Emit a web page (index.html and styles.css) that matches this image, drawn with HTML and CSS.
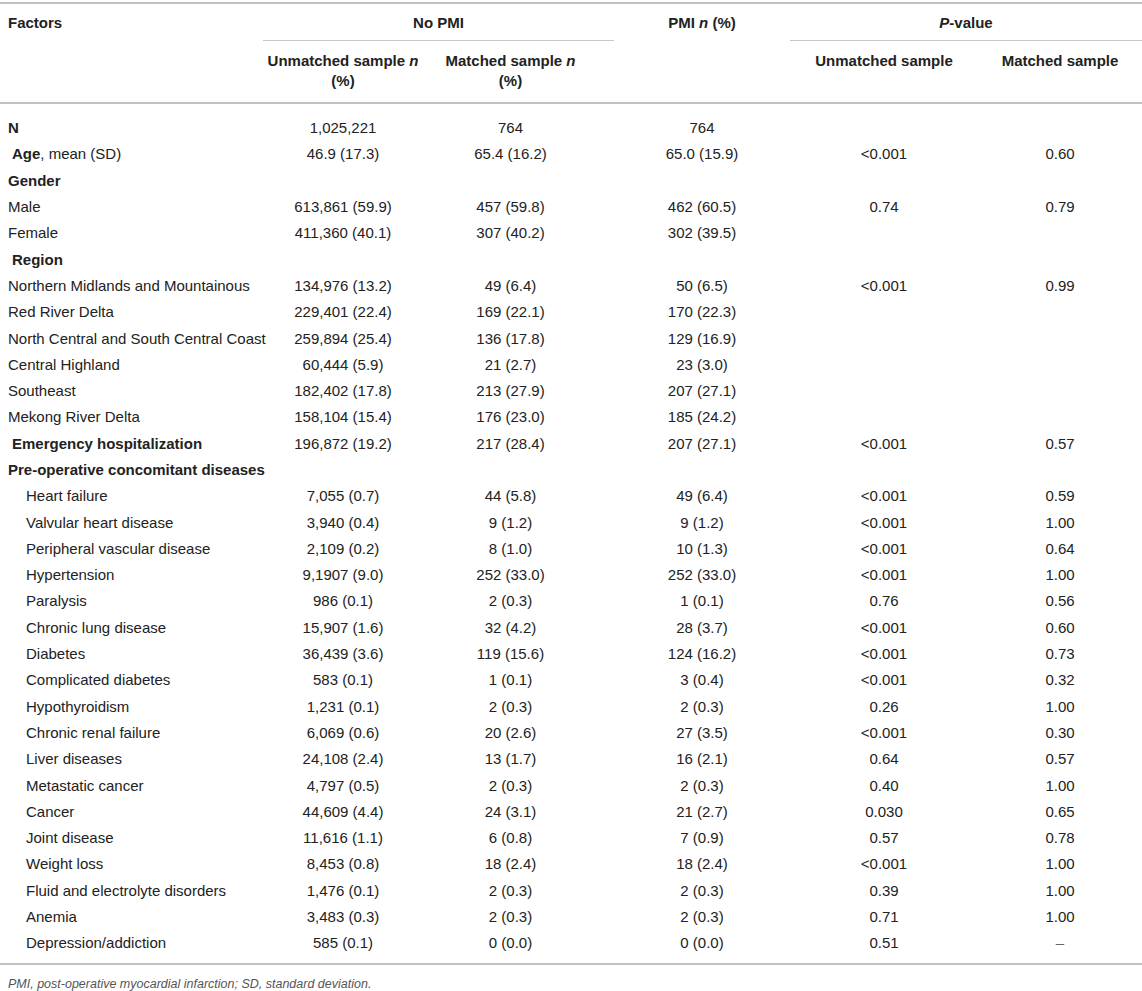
FILE: index.html
```html
<!DOCTYPE html>
<html lang="en">
<head>
<meta charset="utf-8">
<title>Table</title>
<link rel="stylesheet" href="styles.css">
</head>
<body>
<table class="data">
  <colgroup>
    <col class="c1"><col class="c2"><col class="c3"><col class="c4"><col class="c5"><col class="c6">
  </colgroup>
  <thead>
    <tr class="h1">
      <th class="lft" rowspan="2">Factors</th>
      <th colspan="2" class="grp"><div class="rule">No PMI</div></th>
      <th class="pmi" rowspan="2">PMI <i>n</i> (%)</th>
      <th colspan="2" class="grp"><div class="rule"><i>P</i>-value</div></th>
    </tr>
    <tr class="h2">
      <th class="k2">Unmatched sample <i>n</i><br>(%)</th>
      <th class="k3">Matched sample <i>n</i><br>(%)</th>
      <th>Unmatched sample</th>
      <th>Matched sample</th>
    </tr>
  </thead>
  <tbody>
    <tr class="first"><td class="lab"><b>N</b></td><td class="k2">1,025,221</td><td class="k3">764</td><td>764</td><td></td><td></td></tr>
    <tr><td class="lab sp"><b>Age</b>, mean (SD)</td><td class="k2">46.9 (17.3)</td><td class="k3">65.4 (16.2)</td><td>65.0 (15.9)</td><td>&lt;0.001</td><td>0.60</td></tr>
    <tr><td class="lab"><b>Gender</b></td><td class="k2"></td><td class="k3"></td><td></td><td></td><td></td></tr>
    <tr><td class="lab">Male</td><td class="k2">613,861 (59.9)</td><td class="k3">457 (59.8)</td><td>462 (60.5)</td><td>0.74</td><td>0.79</td></tr>
    <tr><td class="lab">Female</td><td class="k2">411,360 (40.1)</td><td class="k3">307 (40.2)</td><td>302 (39.5)</td><td></td><td></td></tr>
    <tr><td class="lab sp"><b>Region</b></td><td class="k2"></td><td class="k3"></td><td></td><td></td><td></td></tr>
    <tr><td class="lab">Northern Midlands and Mountainous</td><td class="k2">134,976 (13.2)</td><td class="k3">49 (6.4)</td><td>50 (6.5)</td><td>&lt;0.001</td><td>0.99</td></tr>
    <tr><td class="lab">Red River Delta</td><td class="k2">229,401 (22.4)</td><td class="k3">169 (22.1)</td><td>170 (22.3)</td><td></td><td></td></tr>
    <tr><td class="lab">North Central and South Central Coast</td><td class="k2">259,894 (25.4)</td><td class="k3">136 (17.8)</td><td>129 (16.9)</td><td></td><td></td></tr>
    <tr><td class="lab">Central Highland</td><td class="k2">60,444 (5.9)</td><td class="k3">21 (2.7)</td><td>23 (3.0)</td><td></td><td></td></tr>
    <tr><td class="lab">Southeast</td><td class="k2">182,402 (17.8)</td><td class="k3">213 (27.9)</td><td>207 (27.1)</td><td></td><td></td></tr>
    <tr><td class="lab">Mekong River Delta</td><td class="k2">158,104 (15.4)</td><td class="k3">176 (23.0)</td><td>185 (24.2)</td><td></td><td></td></tr>
    <tr><td class="lab sp"><b>Emergency hospitalization</b></td><td class="k2">196,872 (19.2)</td><td class="k3">217 (28.4)</td><td>207 (27.1)</td><td>&lt;0.001</td><td>0.57</td></tr>
    <tr><td class="lab"><b>Pre-operative concomitant diseases</b></td><td class="k2"></td><td class="k3"></td><td></td><td></td><td></td></tr>
    <tr><td class="lab ind">Heart failure</td><td class="k2">7,055 (0.7)</td><td class="k3">44 (5.8)</td><td>49 (6.4)</td><td>&lt;0.001</td><td>0.59</td></tr>
    <tr><td class="lab ind">Valvular heart disease</td><td class="k2">3,940 (0.4)</td><td class="k3">9 (1.2)</td><td>9 (1.2)</td><td>&lt;0.001</td><td>1.00</td></tr>
    <tr><td class="lab ind">Peripheral vascular disease</td><td class="k2">2,109 (0.2)</td><td class="k3">8 (1.0)</td><td>10 (1.3)</td><td>&lt;0.001</td><td>0.64</td></tr>
    <tr><td class="lab ind">Hypertension</td><td class="k2">9,1907 (9.0)</td><td class="k3">252 (33.0)</td><td>252 (33.0)</td><td>&lt;0.001</td><td>1.00</td></tr>
    <tr><td class="lab ind">Paralysis</td><td class="k2">986 (0.1)</td><td class="k3">2 (0.3)</td><td>1 (0.1)</td><td>0.76</td><td>0.56</td></tr>
    <tr><td class="lab ind">Chronic lung disease</td><td class="k2">15,907 (1.6)</td><td class="k3">32 (4.2)</td><td>28 (3.7)</td><td>&lt;0.001</td><td>0.60</td></tr>
    <tr><td class="lab ind">Diabetes</td><td class="k2">36,439 (3.6)</td><td class="k3">119 (15.6)</td><td>124 (16.2)</td><td>&lt;0.001</td><td>0.73</td></tr>
    <tr><td class="lab ind">Complicated diabetes</td><td class="k2">583 (0.1)</td><td class="k3">1 (0.1)</td><td>3 (0.4)</td><td>&lt;0.001</td><td>0.32</td></tr>
    <tr><td class="lab ind">Hypothyroidism</td><td class="k2">1,231 (0.1)</td><td class="k3">2 (0.3)</td><td>2 (0.3)</td><td>0.26</td><td>1.00</td></tr>
    <tr><td class="lab ind">Chronic renal failure</td><td class="k2">6,069 (0.6)</td><td class="k3">20 (2.6)</td><td>27 (3.5)</td><td>&lt;0.001</td><td>0.30</td></tr>
    <tr><td class="lab ind">Liver diseases</td><td class="k2">24,108 (2.4)</td><td class="k3">13 (1.7)</td><td>16 (2.1)</td><td>0.64</td><td>0.57</td></tr>
    <tr><td class="lab ind">Metastatic cancer</td><td class="k2">4,797 (0.5)</td><td class="k3">2 (0.3)</td><td>2 (0.3)</td><td>0.40</td><td>1.00</td></tr>
    <tr><td class="lab ind">Cancer</td><td class="k2">44,609 (4.4)</td><td class="k3">24 (3.1)</td><td>21 (2.7)</td><td>0.030</td><td>0.65</td></tr>
    <tr><td class="lab ind">Joint disease</td><td class="k2">11,616 (1.1)</td><td class="k3">6 (0.8)</td><td>7 (0.9)</td><td>0.57</td><td>0.78</td></tr>
    <tr><td class="lab ind">Weight loss</td><td class="k2">8,453 (0.8)</td><td class="k3">18 (2.4)</td><td>18 (2.4)</td><td>&lt;0.001</td><td>1.00</td></tr>
    <tr><td class="lab ind">Fluid and electrolyte disorders</td><td class="k2">1,476 (0.1)</td><td class="k3">2 (0.3)</td><td>2 (0.3)</td><td>0.39</td><td>1.00</td></tr>
    <tr><td class="lab ind">Anemia</td><td class="k2">3,483 (0.3)</td><td class="k3">2 (0.3)</td><td>2 (0.3)</td><td>0.71</td><td>1.00</td></tr>
    <tr class="last"><td class="lab ind">Depression/addiction</td><td class="k2">585 (0.1)</td><td class="k3">0 (0.0)</td><td>0 (0.0)</td><td>0.51</td><td class="dash">–</td></tr>
  </tbody>
</table>
<p class="note">PMI, post-operative myocardial infarction; SD, standard deviation.</p>
</body>
</html>
```

FILE: styles.css
```css
html, body {
  margin: 0;
  padding: 0;
  background: #ffffff;
}
body {
  font-family: "Liberation Sans", Arial, Helvetica, sans-serif;
  font-size: 15px;
  color: #222222;
}
.data {
  width: 1142px;
  border-collapse: collapse;
  table-layout: fixed;
  margin-top: 2px;
  border-top: 2px solid #c2c2c2;
  border-bottom: 2px solid #c2c2c2;
}
.c1 { width: 263px; }
.c2 { width: 170px; }
.c3 { width: 181px; }
.c4 { width: 176px; }
.c5 { width: 188px; }
.c6 { width: 164px; }

th {
  font-weight: bold;
  text-align: center;
  vertical-align: top;
  line-height: 20px;
  padding: 0 4px;
  white-space: nowrap;
}
th.lft {
  text-align: left;
  padding: 9px 8px 0 8px;
}
th.pmi {
  padding-top: 9px;
}
.h1 th.grp {
  padding: 0;
}
.rule {
  padding: 9px 0 7px 0;
  border-bottom: 1px solid #c8c8c8;
}
.h2 th {
  padding: 10px 4px 11px 4px;
}
.h2 th.k2,
td.k2 {
  padding-right: 14px;
}
.h2 th.k3,
td.k3 {
  padding-right: 30px;
}
thead {
  border-bottom: 2px solid #c2c2c2;
}
td {
  text-align: center;
  padding: 0 4px;
  height: 26.3px;
  line-height: 18px;
  vertical-align: middle;
  white-space: nowrap;
}
td.lab {
  text-align: left;
  padding-left: 8px;
}
td.sp {
  padding-left: 12px;
}
td.ind {
  padding-left: 26px;
}
tr.first td {
  padding-top: 11px;
}
tr.last td {
  padding-bottom: 6px;
}
td.dash {
  color: #666666;
}
.note {
  margin: 12px 0 0 8px;
  font-style: italic;
  font-size: 12.5px;
  color: #555555;
}
```
